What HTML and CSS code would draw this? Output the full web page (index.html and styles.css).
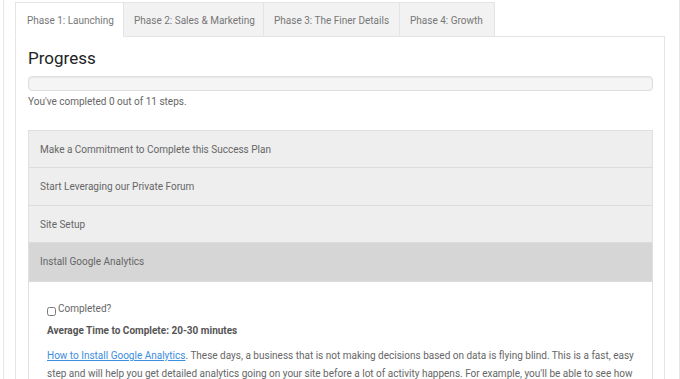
FILE: index.html
```html
<!DOCTYPE html>
<html>
<head>
<meta charset="utf-8">
<link rel="stylesheet" href="styles.css">
</head>
<body>
<div class="page">
  <ul class="tabs">
    <li class="tab active">Phase 1: Launching</li>
    <li class="tab">Phase 2: Sales &amp; Marketing</li>
    <li class="tab">Phase 3: The Finer Details</li>
    <li class="tab">Phase 4: Growth</li>
  </ul>
  <div class="panel">
    <h2 class="title">Progress</h2>
    <div class="progress"></div>
    <p class="status">You've completed 0 out of 11 steps.</p>
    <div class="accordion">
      <div class="acc-head">Make a Commitment to Complete this Success Plan</div>
      <div class="acc-head">Start Leveraging our Private Forum</div>
      <div class="acc-head">Site Setup</div>
      <div class="acc-head open">Install Google Analytics</div>
      <div class="acc-body">
        <label class="check"><input type="checkbox" class="box"> Completed?</label>
        <p class="avg">Average Time to Complete: 20-30 minutes</p>
        <p class="text"><a href="#" class="link">How to Install Google Analytics</a>. These days, a business that is not making decisions based on data is flying blind. This is a fast, easy step and will help you get detailed analytics going on your site before a lot of activity happens. For example, you'll be able to see how many visitors you get and where they come from.</p>
      </div>
    </div>
  </div>
</div>
</body>
</html>
```

FILE: styles.css
```css
html, body {
  margin: 0;
  padding: 0;
  background: #fff;
  font-family: Roboto, "Liberation Sans", sans-serif;
  overflow: hidden;
  height: 379px;
}
.page {
  margin-left: 3px;
  width: 677px;
  height: 379px;
  border-left: 1px solid #e6e6e6;
  border-right: 1px solid #e6e6e6;
  padding: 2px 14px 0 11px;
  box-sizing: border-box;
  overflow: hidden;
}
.tabs {
  list-style: none;
  margin: 0;
  padding: 0;
  display: flex;
  position: relative;
  z-index: 1;
}
.tab {
  height: 35px;
  box-sizing: border-box;
  border: 1px solid #e4e4e4;
  border-left: none;
  background: #f2f2f2;
  color: #777;
  font-size: 10px;
  line-height: 35px;
  padding: 0 0 0 10px;
  white-space: nowrap;
}
.tab:first-child {
  border-left: 1px solid #e4e4e4;
}
.tab.active {
  background: #fff;
  border-bottom-color: #fff;
  width: 109px;
  padding-left: 11px;
}
.tab:nth-child(2) { width: 140px; }
.tab:nth-child(3) { width: 136px; }
.tab:nth-child(4) { width: 95px; }
.panel {
  margin-top: -1px;
  border: 1px solid #e4e4e4;
  border-bottom: none;
  padding: 12px 11px 0 12px;
  width: 650px;
  box-sizing: border-box;
  height: 400px;
}
.title {
  margin: 0;
  font-size: 17px;
  font-weight: 400;
  color: #222;
  line-height: 19px;
}
.progress {
  margin-top: 8px;
  height: 15px;
  box-sizing: border-box;
  border: 1px solid #dedede;
  border-radius: 4px;
  background: #f5f5f5;
  box-shadow: inset 0 1px 2px rgba(0,0,0,0.06);
}
.status {
  margin: 4px 0 0;
  font-size: 10px;
  line-height: 14px;
  color: #666;
}
.accordion {
  margin-top: 21px;
  border: 1px solid #e0e0e0;
  border-bottom: none;
}
.acc-head {
  height: 37px;
  box-sizing: border-box;
  line-height: 36px;
  padding: 1px 0 0 11px;
  background: #eeeeee;
  color: #666;
  font-size: 10px;
  border-top: 1px solid #dcdcdc;
}
.acc-head:first-child {
  border-top: none;
  height: 36px;
}
.acc-head:nth-child(2) { height: 38px; }
.acc-head.open {
  background: #d6d6d6;
  height: 39px;
}
.acc-body {
  background: #fff;
  border-top: 1px solid #dcdcdc;
  padding: 19px 17px 0 18px;
  color: #666;
  font-size: 10px;
}
.check {
  display: flex;
  align-items: center;
  line-height: 16px;
  color: #666;
}
.box {
  margin: 4px 2px 0 0;
  width: 9px;
  height: 9px;
}
.avg {
  margin: 6px 0 0;
  font-weight: 700;
  line-height: 16px;
  color: #555;
}
.text {
  margin: 8px 0 0;
  line-height: 18px;
}
.link {
  color: #3b8de0;
  text-decoration: underline;
}
```
